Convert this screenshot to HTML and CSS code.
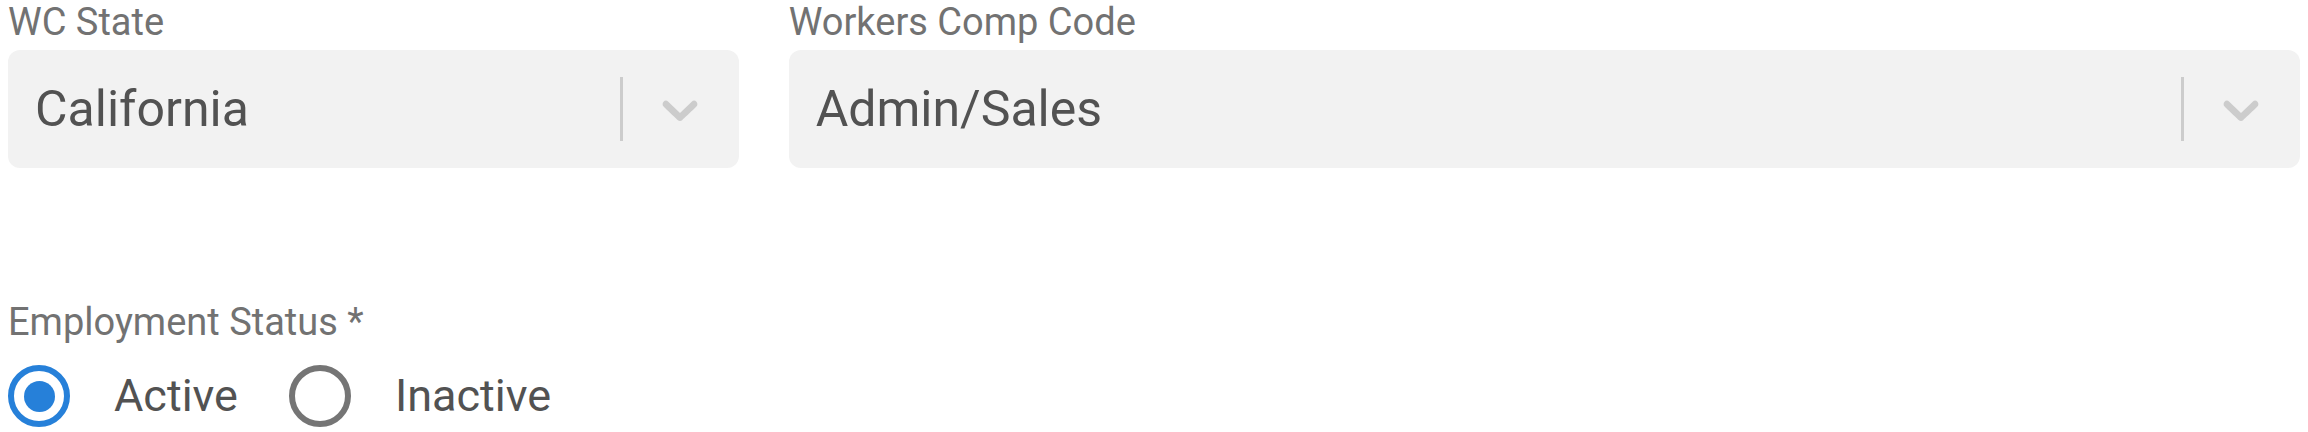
FILE: index.html
```html
<!DOCTYPE html>
<html lang="en">
<head>
<meta charset="utf-8">
<title>Employee form</title>
<link rel="stylesheet" href="styles.css">
</head>
<body>
<div class="page">
  <div class="row">
    <div class="field">
      <div class="label">WC State</div>
      <div class="select">
        <div class="value">California</div>
        <span class="sep"></span>
        <span class="indicator">
          <svg viewBox="0 0 20 20" width="60" height="60"><path d="M4.516 7.548c0.436-0.446 1.043-0.481 1.576 0l3.908 3.747 3.908-3.747c0.533-0.481 1.141-0.446 1.574 0 0.436 0.445 0.408 1.197 0 1.615-0.406 0.418-4.695 4.502-4.695 4.502-0.217 0.223-0.502 0.335-0.787 0.335s-0.57-0.112-0.789-0.335c0 0-4.287-4.084-4.695-4.502s-0.436-1.170 0-1.615z" fill="#cccccc"/></svg>
        </span>
      </div>
    </div>
    <div class="field wide">
      <div class="label">Workers Comp Code</div>
      <div class="select">
        <div class="value">Admin/Sales</div>
        <span class="sep"></span>
        <span class="indicator">
          <svg viewBox="0 0 20 20" width="60" height="60"><path d="M4.516 7.548c0.436-0.446 1.043-0.481 1.576 0l3.908 3.747 3.908-3.747c0.533-0.481 1.141-0.446 1.574 0 0.436 0.445 0.408 1.197 0 1.615-0.406 0.418-4.695 4.502-4.695 4.502-0.217 0.223-0.502 0.335-0.787 0.335s-0.57-0.112-0.789-0.335c0 0-4.287-4.084-4.695-4.502s-0.436-1.170 0-1.615z" fill="#cccccc"/></svg>
        </span>
      </div>
    </div>
  </div>
  <div class="status">
    <div class="label">Employment Status *</div>
    <div class="radios">
      <label class="radio-item"><span class="radio checked"><span class="dot"></span></span><span class="radio-text">Active</span></label>
      <label class="radio-item"><span class="radio"></span><span class="radio-text">Inactive</span></label>
    </div>
  </div>
</div>
</body>
</html>
```

FILE: styles.css
```css
html, body {
  margin: 0;
  padding: 0;
  background: #ffffff;
}
body {
  font-family: Roboto, "Liberation Sans", Arial, sans-serif;
  overflow: hidden;
}
.page {
  padding: 1px 8px 0 8px;
}
.row {
  display: grid;
  grid-template-columns: repeat(3, 1fr);
  column-gap: 50px;
}
.field.wide {
  grid-column: span 2;
}
.label {
  font-size: 38px;
  line-height: 42px;
  color: #727272;
  margin-bottom: 7px;
}
.select {
  height: 118px;
  box-sizing: border-box;
  background: #f2f2f2;
  border-radius: 12px;
  display: flex;
  align-items: center;
}
.value {
  flex: 1;
  padding-left: 27px;
  font-size: 50px;
  color: #525252;
  line-height: 58px;
}
.sep {
  width: 3px;
  height: 64px;
  background: #cccccc;
}
.indicator {
  display: flex;
  align-items: center;
  padding: 0 29px 0 27px;
}
.status {
  margin-top: 133px;
}
.radios {
  display: flex;
  align-items: center;
  gap: 51px;
  margin-top: 22px;
}
.radio-item {
  display: flex;
  align-items: center;
  gap: 44px;
}
.radio {
  width: 62px;
  height: 62px;
  box-sizing: border-box;
  border: 6px solid #757575;
  border-radius: 50%;
  display: flex;
  align-items: center;
  justify-content: center;
}
.radio.checked {
  border-color: #2680d9;
}
.dot {
  width: 31px;
  height: 31px;
  border-radius: 50%;
  background: #2680d9;
}
.radio-text {
  font-size: 45px;
  line-height: 62px;
  color: #525252;
}
```
